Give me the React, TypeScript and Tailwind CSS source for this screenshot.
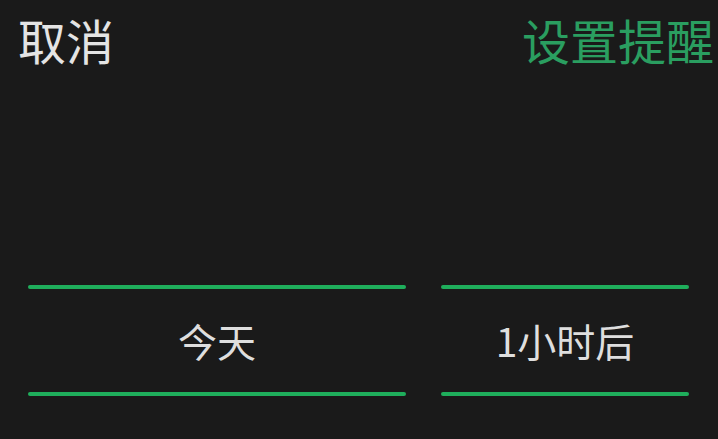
const font = "font-['Noto_Sans_CJK_SC','Noto_Sans',sans-serif]";

function Wheel({ label, width }: { label: string; width: string }) {
  return (
    <div className={`flex flex-col ${width}`}>
      <div className="h-[4px] rounded-full bg-[#1fae5c]" />
      <div className="flex h-[103px] items-center justify-center text-[39px] text-[#dedede]">{label}</div>
      <div className="h-[4px] rounded-full bg-[#1fae5c]" />
    </div>
  );
}

export default function App() {
  return (
    <div className={`h-[439px] w-[718px] overflow-hidden bg-[#1a1a1a] ${font}`}>
      <div className="flex items-center justify-between pl-[18px] pr-[4px] pt-[10px] text-[48px] leading-[58px]">
        <span className="text-[#e4e4e4]">取消</span>
        <span className="text-[#2a9e60]">设置提醒</span>
      </div>
      <div className="mt-[217px] flex gap-[35px] pl-[28px]">
        <Wheel label="今天" width="w-[378px]" />
        <Wheel label="1小时后" width="w-[248px]" />
      </div>
    </div>
  );
}
